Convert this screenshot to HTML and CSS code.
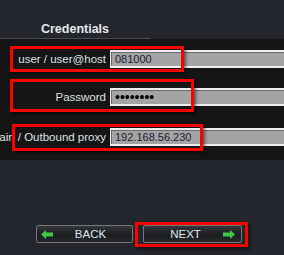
FILE: index.html
```html
<!DOCTYPE html>
<html lang="en">
<head>
    <meta charset="UTF-8">
    <meta name="viewport" content="width=device-width, initial-scale=1.0">
    <title>Credentials</title>
    <link rel="stylesheet" href="styles.css">
</head>
<body>
    <div class="page">
        <div class="header">
            <h2>Credentials</h2>
        </div>
        <div class="panel">
            <div class="row">
                <label class="label" for="user">user / user@host</label>
                <input class="field" type="text" id="user" value="081000">
            </div>
            <div class="row row-password">
                <label class="label" for="pass">Password</label>
                <input class="field" type="password" id="pass" value="12345678">
            </div>
            <div class="row row-proxy">
                <label class="label" for="proxy"><span>Domain / Outbound proxy</span></label>
                <input class="field" type="text" id="proxy" value="192.168.56.230">
            </div>
        </div>
        <div class="actions">
            <button class="nav-btn back">
                <svg class="arrow" width="12" height="9" viewBox="0 0 12 9"><path d="M0 4.5 L5 0 L5 2.5 L12 2.5 L12 6.5 L5 6.5 L5 9 Z"/></svg>
                <span>BACK</span>
            </button>
            <button class="nav-btn next">
                <span>NEXT</span>
                <svg class="arrow" width="12" height="9" viewBox="0 0 12 9"><path d="M12 4.5 L7 0 L7 2.5 L0 2.5 L0 6.5 L7 6.5 L7 9 Z"/></svg>
            </button>
        </div>

        <!-- red annotation boxes -->
        <div class="mark mark-user"></div>
        <div class="mark mark-pass"></div>
        <div class="mark mark-proxy"></div>
        <div class="mark mark-next"></div>
    </div>
</body>
</html>
```

FILE: styles.css
```css
* {
    margin: 0;
    padding: 0;
    box-sizing: border-box;
}
body {
    font-family: 'Liberation Sans', Arial, sans-serif;
    background: #23262d;
    width: 284px;
    height: 255px;
    overflow: hidden;
}
.page {
    position: relative;
    height: 255px;
}
.header {
    height: 39px;
    border-bottom: 1px solid #4a4d55;
    width: 150px;
    text-align: center;
    padding-top: 20px;
}
.header h2 {
    font-size: 12.5px;
    font-weight: bold;
    color: #e6e8ec;
    line-height: 18px;
}
.panel {
    background: #151515;
    height: 121px;
    padding-top: 11px;
}
.row {
    display: flex;
    align-items: center;
    gap: 4px;
    height: 18px;
}
.row-password {
    margin-top: 20px;
}
.row-proxy {
    margin-top: 22px;
}
.label {
    width: 106px;
    flex-shrink: 0;
    display: flex;
    justify-content: flex-end;
    overflow: hidden;
    white-space: nowrap;
    font-size: 11.5px;
    color: #dfe1e6;
}
.field {
    flex: 1;
    height: 18px;
    background: #a4a4a4;
    border: 1px solid #eeeeee;
    border-top-width: 2px;
    border-bottom-width: 2px;
    border-right: none;
    box-shadow: inset 1px 1px 0 #6a6a6a;
    padding-left: 4px;
    font-family: 'Liberation Sans', Arial, sans-serif;
    font-size: 11px;
    color: #1c2030;
    outline: none;
}
.field[type="password"] {
    font-size: 14px;
    letter-spacing: 0;
    color: #000;
}
.actions {
    display: flex;
    gap: 10px;
    padding: 65px 0 0 36px;
}
.nav-btn {
    height: 18px;
    display: flex;
    align-items: center;
    border: 1px solid #74767a;
    border-radius: 2px;
    background: linear-gradient(#34363a, #1c1d20 55%, #26282b);
    color: #dfe6f4;
    font-family: 'Liberation Sans', Arial, sans-serif;
    font-size: 11.5px;
    padding: 0 4px;
}
.nav-btn span {
    flex: 1;
    text-align: center;
}
.back {
    width: 97px;
}
.next {
    width: 99px;
    padding-right: 6px;
}
.arrow {
    fill: #3fc84a;
    flex-shrink: 0;
}
.mark {
    position: absolute;
    border: 3px solid #ff0000;
    box-shadow: 2px 2px 3px rgba(0, 0, 0, 0.5);
}
.mark-user {
    left: 10px;
    top: 46px;
    width: 174px;
    height: 26px;
}
.mark-pass {
    left: 10px;
    top: 79px;
    width: 184px;
    height: 33px;
}
.mark-proxy {
    left: 12px;
    top: 124px;
    width: 191px;
    height: 27px;
}
.mark-next {
    left: 135px;
    top: 222px;
    width: 113px;
    height: 25px;
}
```
